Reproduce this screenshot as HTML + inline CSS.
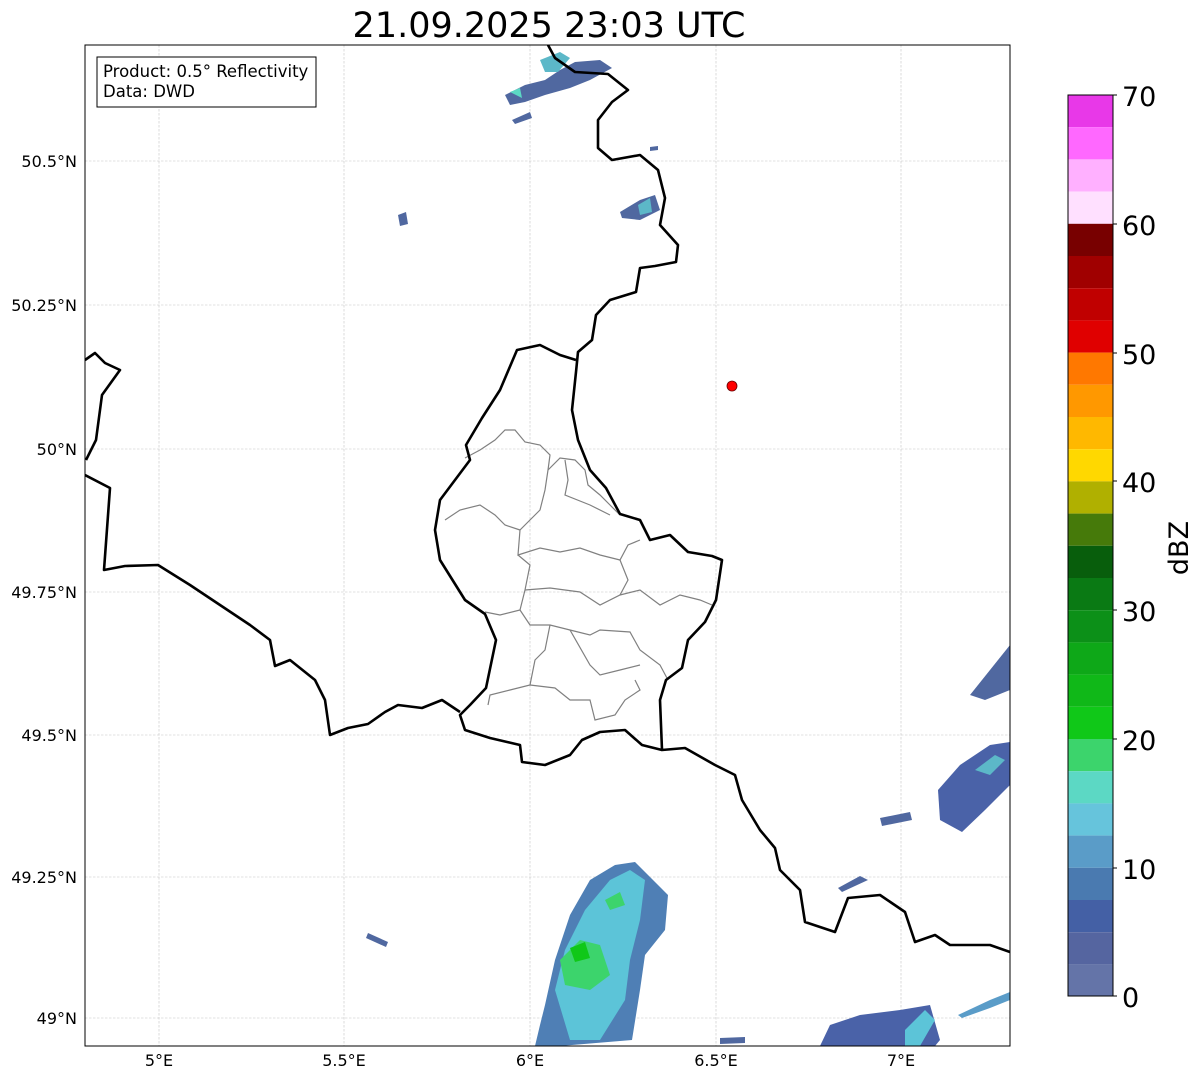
<!DOCTYPE html>
<html><head><meta charset="utf-8"><style>
html,body{margin:0;padding:0;background:#fff;}
svg{display:block;font-family:"DejaVu Sans","Liberation Sans",sans-serif;}
</style></head><body>
<svg width="1202" height="1081" viewBox="0 0 1202 1081" xmlns="http://www.w3.org/2000/svg">
<rect width="1202" height="1081" fill="#fff"/>
<text x="549" y="37" font-size="35" text-anchor="middle" fill="#000">21.09.2025 23:03 UTC</text>
<defs><clipPath id="c"><rect x="85" y="45" width="925" height="1001"/></clipPath></defs>
<g clip-path="url(#c)">
<g stroke="#c4c4c4" stroke-width="0.6" stroke-dasharray="2.5,1.5">
<line x1="159" y1="45" x2="159" y2="1046"/><line x1="344" y1="45" x2="344" y2="1046"/><line x1="530" y1="45" x2="530" y2="1046"/><line x1="716" y1="45" x2="716" y2="1046"/><line x1="901" y1="45" x2="901" y2="1046"/>
<line x1="85" y1="161" x2="1010" y2="161"/><line x1="85" y1="305" x2="1010" y2="305"/><line x1="85" y1="449" x2="1010" y2="449"/><line x1="85" y1="592" x2="1010" y2="592"/><line x1="85" y1="735" x2="1010" y2="735"/><line x1="85" y1="877" x2="1010" y2="877"/><line x1="85" y1="1018" x2="1010" y2="1018"/>
</g>
<g>
<polygon points="505,95 525,85 545,80 560,70 575,62 600,60 612,68 590,80 570,88 545,95 525,102 510,105" fill="#5068a0"/>
<polygon points="540,60 560,52 570,58 558,72 545,72" fill="#5cb8c8"/>
<polygon points="510,92 520,88 522,98" fill="#5cd8c4"/>
<polygon points="512,120 530,112 532,118 515,124" fill="#5068a0"/>
<polygon points="620,212 640,200 655,195 660,210 640,220 622,218" fill="#5068a0"/>
<polygon points="638,205 650,198 652,212 640,215" fill="#5cb8c8"/>
<polygon points="398,215 406,212 408,224 400,226" fill="#5068a0"/>
<polygon points="650,147 658,146 658,150 650,151" fill="#5068a0"/>
<polygon points="970,695 990,670 1010,645 1010,690 985,700" fill="#5068a0"/>
<polygon points="938,790 960,765 990,745 1010,742 1010,785 985,810 962,832 940,820" fill="#4a62a8"/>
<polygon points="975,770 995,755 1005,760 990,775" fill="#5cb8c8"/>
<polygon points="880,818 910,812 912,820 882,826" fill="#5068a0"/>
<polygon points="838,888 860,876 868,880 842,892" fill="#5068a0"/>
<polygon points="368,933 388,942 386,947 366,938" fill="#5068a0"/>
<polygon points="545,1005 555,960 570,915 590,880 615,865 635,862 668,895 665,930 645,955 640,990 632,1040 560,1046 535,1046 540,1025" fill="#4f7fb5"/>
<polygon points="555,990 565,950 585,910 610,880 630,870 645,880 640,920 630,960 625,1000 600,1040 570,1040" fill="#5cc4d8"/>
<polygon points="560,960 580,940 600,945 610,975 590,990 565,985" fill="#3cd46c"/>
<polygon points="570,948 585,942 590,958 575,962" fill="#10c818"/>
<polygon points="605,900 620,892 625,905 610,910" fill="#3cd46c"/>
<polygon points="820,1046 830,1025 860,1015 900,1010 930,1005 940,1040 935,1046" fill="#4a62a8"/>
<polygon points="905,1030 925,1010 935,1020 920,1046 905,1046" fill="#5cc4d8"/>
<polygon points="958,1015 990,1000 1010,992 1010,1000 990,1008 962,1018" fill="#5a9cc8"/>
<polygon points="720,1038 745,1037 745,1043 720,1044" fill="#5068a0"/>
</g>
<g fill="none" stroke="#808080" stroke-width="1.2">
<path d="M465,458 L480,450 495,440 505,430 515,430 525,442 540,445 550,455 548,470 545,490 540,510 520,530 518,555 540,548 560,552 580,548 600,555 620,560 628,545 640,540"/>
<path d="M548,470 L560,458 575,460 585,470 588,485 600,495 610,505 620,515"/>
<path d="M565,460 L568,480 565,495 590,505 610,515"/>
<path d="M445,520 L460,510 480,505 495,515 505,525 520,530"/>
<path d="M518,555 L530,565 525,590 520,610 500,615 485,612"/>
<path d="M525,590 L550,588 580,592 600,605 620,595 640,590 660,605 680,595 700,600 712,605"/>
<path d="M620,560 L628,580 620,595"/>
<path d="M520,610 L530,625 550,625 570,630 590,635 600,630 630,632 640,650 660,665 668,680"/>
<path d="M550,625 L545,650 535,660 530,685 510,690 490,695 488,705"/>
<path d="M570,630 L590,665 600,675 620,670 640,665"/>
<path d="M530,685 L555,688 570,700 590,700 595,720 615,715 625,700 640,690 635,680"/>
</g>
<g fill="none" stroke="#000" stroke-width="2.6" stroke-linejoin="round">
<path d="M548,45 L555,58 575,72 608,74 628,90 612,102 598,120 598,148 612,160 640,155 658,170 665,198 660,225 678,245 676,262 655,266 640,268 636,292 610,300 596,315 592,340 578,352 576,372 572,410 578,440 590,470 606,488 620,514 640,520 650,540 670,535 688,552 712,556 722,560 716,600 705,622 688,640 682,668 666,680 660,700 662,750 685,748 715,765 735,775 742,800 760,830 775,848 780,870 800,890 805,922 835,932 848,898 880,895 905,912 915,942 935,935 950,945 990,945 1010,952"/>
<path d="M576,360 L560,355 540,345 517,350 500,390 482,418 466,445 470,460 455,480 440,500 435,530 440,560 465,600 485,614 496,640 486,688 470,705 460,715 465,730 490,738 520,745 522,762 545,765 570,755 582,740 600,732 625,730 642,745 662,750"/>
<path d="M85,475 L110,488 104,570 125,566 158,565 190,585 220,605 250,625 270,640 275,666 290,660 315,680 325,700 330,735 348,728 368,724 385,712 398,705 422,708 442,700 460,712"/>
<path d="M85,360 L95,353 105,363 120,370 102,395 96,440 86,460"/>
</g>
<circle cx="732" cy="386" r="5" fill="#f00" stroke="#600" stroke-width="0.8"/>
</g>
<rect x="85" y="45" width="925" height="1001" fill="none" stroke="#000" stroke-width="1"/>
<rect x="97" y="57" width="219" height="50" fill="#fff" stroke="#000" stroke-width="1"/>
<text x="103" y="77" font-size="16.5">Product: 0.5° Reflectivity</text>
<text x="103" y="97" font-size="16.5">Data: DWD</text>
<g font-size="16" text-anchor="end">
<text x="77" y="167">50.5°N</text><text x="77" y="311">50.25°N</text><text x="77" y="455">50°N</text><text x="77" y="598">49.75°N</text><text x="77" y="741">49.5°N</text><text x="77" y="883">49.25°N</text><text x="77" y="1024">49°N</text>
</g>
<g font-size="16" text-anchor="middle">
<text x="159" y="1066">5°E</text><text x="344" y="1066">5.5°E</text><text x="530" y="1066">6°E</text><text x="716" y="1066">6.5°E</text><text x="901" y="1066">7°E</text>
</g>
<g>
<rect x="1068" y="95.0" width="45" height="32.2" fill="#e838e8"/>
<rect x="1068" y="127.2" width="45" height="32.2" fill="#ff68ff"/>
<rect x="1068" y="159.4" width="45" height="32.2" fill="#ffb0ff"/>
<rect x="1068" y="191.6" width="45" height="32.2" fill="#ffe0ff"/>
<rect x="1068" y="223.8" width="45" height="32.2" fill="#780000"/>
<rect x="1068" y="256.0" width="45" height="32.2" fill="#a00000"/>
<rect x="1068" y="288.2" width="45" height="32.2" fill="#c00000"/>
<rect x="1068" y="320.4" width="45" height="32.2" fill="#e00000"/>
<rect x="1068" y="352.6" width="45" height="32.2" fill="#ff7800"/>
<rect x="1068" y="384.8" width="45" height="32.2" fill="#ff9800"/>
<rect x="1068" y="417.0" width="45" height="32.2" fill="#ffb800"/>
<rect x="1068" y="449.2" width="45" height="32.2" fill="#ffd800"/>
<rect x="1068" y="481.4" width="45" height="32.2" fill="#b0b000"/>
<rect x="1068" y="513.6" width="45" height="32.2" fill="#467a0a"/>
<rect x="1068" y="545.8" width="45" height="32.2" fill="#085e0c"/>
<rect x="1068" y="578.0" width="45" height="32.2" fill="#0a7a14"/>
<rect x="1068" y="610.2" width="45" height="32.2" fill="#0c9018"/>
<rect x="1068" y="642.4" width="45" height="32.2" fill="#0ea818"/>
<rect x="1068" y="674.6" width="45" height="32.2" fill="#10b818"/>
<rect x="1068" y="706.8" width="45" height="32.2" fill="#10c818"/>
<rect x="1068" y="739.0" width="45" height="32.2" fill="#3cd46c"/>
<rect x="1068" y="771.2" width="45" height="32.2" fill="#5cd8c4"/>
<rect x="1068" y="803.4" width="45" height="32.2" fill="#66c4dc"/>
<rect x="1068" y="835.6" width="45" height="32.2" fill="#5a9cc8"/>
<rect x="1068" y="867.8" width="45" height="32.2" fill="#4a7ab0"/>
<rect x="1068" y="900.0" width="45" height="32.2" fill="#4460a5"/>
<rect x="1068" y="932.2" width="45" height="32.2" fill="#5565a0"/>
<rect x="1068" y="964.4" width="45" height="31.6" fill="#6474a8"/>
<rect x="1068" y="95" width="45" height="901" fill="none" stroke="#000" stroke-width="1"/>
</g>
<g font-size="27" fill="#000">
<text x="1122" y="106">70</text><text x="1122" y="235">60</text><text x="1122" y="364">50</text><text x="1122" y="492">40</text><text x="1122" y="621">30</text><text x="1122" y="750">20</text><text x="1122" y="879">10</text><text x="1122" y="1007">0</text>
</g>
<g stroke="#000" stroke-width="1"><line x1="1113" y1="95" x2="1117" y2="95"/><line x1="1113" y1="224" x2="1117" y2="224"/><line x1="1113" y1="353" x2="1117" y2="353"/><line x1="1113" y1="481" x2="1117" y2="481"/><line x1="1113" y1="610" x2="1117" y2="610"/><line x1="1113" y1="739" x2="1117" y2="739"/><line x1="1113" y1="868" x2="1117" y2="868"/><line x1="1113" y1="996" x2="1117" y2="996"/></g>
<text x="1188" y="548" font-size="27" text-anchor="middle" transform="rotate(-90 1188 548)">dBZ</text>
</svg>
</body></html>
